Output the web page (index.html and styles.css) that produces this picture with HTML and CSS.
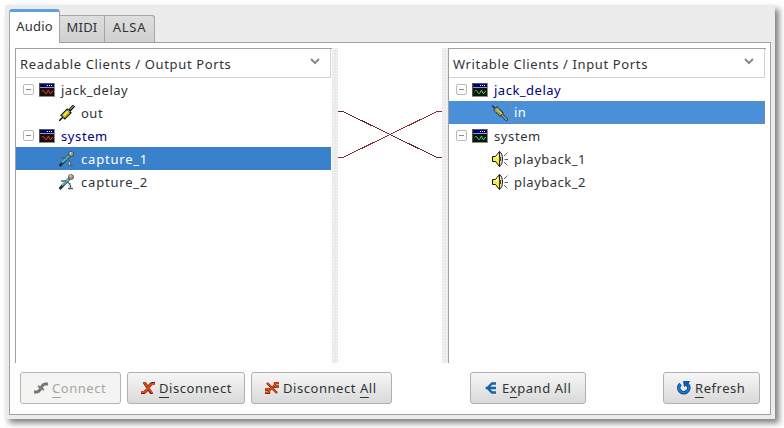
FILE: index.html
```html
<!DOCTYPE html>
<html lang="en">
<head>
<meta charset="utf-8">
<title>Connections</title>
<link rel="stylesheet" href="styles.css">
</head>
<body>
<svg class="defs" width="0" height="0" aria-hidden="true">
  <symbol id="term" viewBox="0 0 16 14">
    <path fill="#151010" d="M0 0h16v14H0z"/><path fill="#555" d="M0 0h15v1H1v12H0z"/><path fill="#8c8c8c" d="M15 0h1v14H0v-1h15z"/>
    <path fill="#00008b" d="M2 1h12v3H2z"/><path fill="#fff" d="M8 2h1v1H8zM10 2h1v1h-1zM12 2h1v1h-1z"/><path fill="#999" d="M1 4h14v1H1z"/>
    <path fill="none" stroke="currentColor" stroke-width="1" d="M2.500 8.500l1-1h1l2 3h1l2-3.500 1.500 3.500h1l1-2h1"/>
  </symbol>
  <symbol id="plug" viewBox="0 0 16 16">
    <path stroke="#111" stroke-width="1.500" d="M0 16l4-4"/><path stroke="#111" stroke-width="3" d="M10 6l5-5.500"/>
    <path stroke="#ddd" stroke-width="1" d="M11 4.500l4-4"/>
    <path stroke="#111" stroke-width="6.500" d="M3.500 12.500l7-7"/>
    <path stroke="#c8b81c" stroke-width="4.500" d="M4.500 11.500l5-5"/>
    <path stroke="#fff25a" stroke-width="1.500" d="M4.500 10.500l4.500-4.500"/>
    <path stroke="#999" stroke-width="1" d="M9 5l2 2M3 10.500l2.500 2.500"/>
  </symbol>
  <symbol id="jack" viewBox="0 0 16 16">
    <path stroke="#263545" stroke-width="1.500" d="M0 .5l4 4"/><path stroke="#263545" stroke-width="3" d="M10 10l5.500 5.500"/>
    <path stroke="#263545" stroke-width="5.500" d="M3 3l7 7"/>
    <path stroke="#aaa83b" stroke-width="3.800" d="M3.500 3.500l6 6"/>
    <path stroke="#dddc75" stroke-width="1" d="M5 4l5 5"/>
    <path stroke="#9eabb2" stroke-width="1.200" d="M3.500 6.500l3-3M10 10l5 5"/>
  </symbol>
  <symbol id="mic" viewBox="0 0 16 16">
    <path stroke="#243237" stroke-width="2.800" d="M.5 15l10-10.500"/>
    <path stroke="#50b9bd" stroke-width="2" d="M3 11.500l7.500-7"/>
    <circle cx="12" cy="3" r="2.800" fill="#444"/><circle cx="12" cy="2.800" r="2.100" fill="#a7a58a"/><path fill="#eee6a0" d="M11 1h1v2h-1z"/>
    <path fill="none" stroke="#52636b" stroke-width="1.300" d="M2 7h5M8 8l3 2-1 2M11.500 11v4M9 14.500h5"/>
    <path fill="#ccc" d="M10 11h1v3h-1z"/>
  </symbol>
  <symbol id="speaker" viewBox="0 0 16 16">
    <path fill="#ffed31" stroke="#111" d="M.5 5.500h3l4-5v15l-4-5h-3z"/>
    <path fill="#fffbc0" d="M2 6h2l2-3v4H2z"/>
    <path fill="#ddd" stroke="#222" d="M7.500.5c4 2 4 13 0 15z"/>
    <path fill="#444" d="M7 6h2v4H7z"/>
    <path stroke="#666" d="M12 5l3.500-3.500M12.500 8.500H16M12 11l3.500 3.500"/>
  </symbol>
  <symbol id="minus" viewBox="0 0 11 11"><rect x=".5" y=".5" width="10" height="10" rx="1.500" fill="#fdfdfd" stroke="#b9b9b9"/><path stroke="#8c8c88" d="M3 5.500h5"/></symbol>
  <symbol id="chev" viewBox="0 0 10 7"><path fill="none" stroke="#888a85" stroke-width="2" d="M1 1l4 4 4-4"/></symbol>
</svg>

<main class="window">
  <nav class="tabs">
    <div class="tab active">Audio</div><div class="tab midi">MIDI</div><div class="tab alsa">ALSA</div>
  </nav>
  <section class="pane">
    <div class="patch">
      <div class="list">
        <div class="head"><span>Readable Clients / Output Ports</span><svg class="chev"><use href="#chev"/></svg></div>
        <div class="row"><svg class="minus"><use href="#minus"/></svg><svg class="term red"><use href="#term"/></svg><span>jack_delay</span></div>
        <div class="row port"><svg class="icon"><use href="#plug"/></svg><span>out</span></div>
        <div class="row linked"><svg class="minus"><use href="#minus"/></svg><svg class="term red"><use href="#term"/></svg><span class="short">system</span></div>
        <div class="row port selected"><svg class="icon"><use href="#mic"/></svg><span class="wide">capture_1</span></div>
        <div class="row port"><svg class="icon"><use href="#mic"/></svg><span class="wide">capture_2</span></div>
      </div>
      <div class="split"></div>
      <svg class="wires" viewBox="0 0 104 315" shape-rendering="crispEdges">
        <path fill="none" stroke="#5b2a2d" d="M0 63.500h5L99 109.500h5"/>
        <path fill="none" stroke="#8d2d33" d="M0 109.500h5L99 63.500h5"/>
      </svg>
      <div class="split"></div>
      <div class="list">
        <div class="head"><span>Writable Clients / Input Ports</span><svg class="chev"><use href="#chev"/></svg></div>
        <div class="row linked"><svg class="minus"><use href="#minus"/></svg><svg class="term green"><use href="#term"/></svg><span>jack_delay</span></div>
        <div class="row port current"><svg class="icon"><use href="#jack"/></svg><span class="focus">in</span></div>
        <div class="row"><svg class="minus"><use href="#minus"/></svg><svg class="term green"><use href="#term"/></svg><span class="short">system</span></div>
        <div class="row port"><svg class="icon"><use href="#speaker"/></svg><span>playback_1</span></div>
        <div class="row port"><svg class="icon"><use href="#speaker"/></svg><span>playback_2</span></div>
      </div>
    </div>
    <div class="buttons">
      <button class="btn connect" disabled><svg viewBox="0 0 14 12"><path fill="none" stroke="#777" stroke-width="3" d="M0 10h3l2-1 4-6 2-1h3"/><path stroke="#777" stroke-width="2" d="M4 4l6 4"/></svg><span><u>C</u>onnect</span></button>
      <button class="btn disconnect"><svg viewBox="0 0 14 12"><path fill="none" stroke="#64190a" stroke-width="3" d="M0 10.500h3l2-1.500 4-6 2-1.500h3M3 0l8 12"/><path fill="none" stroke="#e34a12" stroke-width="1.800" d="M0 10h3l2-1 4-6 2-1h3M3 0l8 11"/></svg><span><u>D</u>isconnect</span></button>
      <button class="btn all"><svg viewBox="0 0 14 12"><path fill="none" stroke="#64190a" stroke-width="2.400" d="M0 7.500h4v3.500H0M14 1h-4v3.500h4M4 8l6-4.500M2 1l10 10"/><path fill="none" stroke="#e34a12" stroke-width="1.500" d="M0 7h4v3.500H0M14 1h-4v3h4M4 8l6-5M2 1l10 10"/></svg><span>Disconnect <u>A</u>ll</span></button>
      <button class="btn expand"><svg viewBox="0 0 12 12"><path fill="none" stroke="#1763a7" stroke-width="2.400" d="M1 6h10M11 1.500H7L4.500 4v4L7 10.500h4"/><path fill="#1763a7" d="M0 6l4-2.500v5z"/></svg><span>E<u>x</u>pand All</span></button>
      <button class="btn refresh"><svg viewBox="0 0 14 14"><path fill="none" stroke="#0b3e79" stroke-width="3.500" d="M3.500 3a5 5 0 1 0 7.500 1"/><path fill="none" stroke="#137bd8" stroke-width="2" d="M3.500 3a5 5 0 1 0 7.500 1"/><path fill="#0c58a9" d="M6 0h7l-1 2-1 5-2-2-2 1z"/></svg><span><u>R</u>efresh</span></button>
    </div>
  </section>
</main>
</body>
</html>
```
FILE: styles.css
```css
* { box-sizing: border-box; }
html { height: 428px; overflow: hidden; }
body {
  margin: 0; padding: 5px; height: 428px; background: #fff; color: #2e3436; overflow: hidden;
  font: 13px/18px "Noto Sans", "Open Sans", sans-serif; letter-spacing: .5px;
}
.defs { display: none; }
svg { display: block; flex: none; }
span { white-space: pre; }
.window {
  width: 770px; height: 414px; padding: 4px; background: #ececec;
  display: flex; flex-direction: column;
  box-shadow: 4px 4px 6px rgba(0, 0, 0, .5);
}
.tabs { display: flex; align-items: flex-end; height: 33px; flex: none; letter-spacing: .2px; }
.tab {
  height: 27px; padding-top: 3px; text-align: center;
  border: 1px solid #a5a5a5; border-left: 0; border-bottom: 0;
  background: linear-gradient(#dedede, #d0d0d0);
}
.tab.active {
  width: 51px; height: 34px; margin-bottom: -1px; padding-top: 5px;
  background: #fefefe; border: 1px solid #a5a5a5; border-bottom: 0;
  border-top: 3px solid #5f9fe2; border-radius: 3px 3px 0 0; z-index: 1;
}
.midi { width: 45px; }
.alsa { width: 50px; border-top-right-radius: 3px; letter-spacing: .7px; }
.tab { padding-top: 2px; }
.pane { height: 373px; border: 1px solid #a0a0a0; background: #fefefe; padding: 5px 4px 5px 5px; flex: none; }
.patch { display: flex; height: 315px; }
.list { width: 317px; border-left: 1px solid #a0a0a0; border-top: 1px solid #a0a0a0; background: #fff; padding-right: 1px; }
.list:last-child { width: 318px; }
.head {
  height: 29px; padding: 1px 10px 0 4px; display: flex; align-items: center; justify-content: space-between;
  border-right: 1px solid #d3d3d3; border-bottom: 1px solid #d3d3d3; letter-spacing: .63px;
}
.chev { width: 10px; height: 7px; margin-bottom: 4px; }
.row { height: 23px; display: flex; align-items: center; padding-left: 7px; }
.minus { width: 11px; height: 11px; margin-right: 5px; }
.term { width: 16px; height: 14px; margin-right: 6px; }
.red { color: #ff3415; }
.green { color: #20e83c; }
.linked { color: #000080; }
.port { padding-left: 43px; }
.icon { width: 16px; height: 16px; margin-right: 6px; }
.wide { letter-spacing: .8px; }
.short { letter-spacing: .6px; }
.selected { background: #3a81cc; color: #fff; }
.current { background: #4a90d9; color: #fff; }
.focus {
  flex: 1; height: 23px; line-height: 23px; margin-left: -3px; padding-left: 3px;
  outline: 1px dotted #8a8a80; outline-offset: -1px;
}
.split {
  width: 6px; background-color: #eaeaea;
  background-image: radial-gradient(circle, #fff 35%, transparent 40%); background-size: 3px 3px;
}
.wires { width: 104px; height: 315px; }
.buttons { display: flex; padding: 9px 6px 0 5px; }
.btn {
  height: 32px; padding: 0; display: flex; align-items: center; gap: 4px;
  font: inherit; letter-spacing: .55px; color: #2e3436;
  border: 1px solid #b0b0b0; border-radius: 3px; background: linear-gradient(#f6f6f6, #d9d9d9);
}
.btn svg { width: 14px; height: 12px; }
.btn u { text-underline-offset: 4px; text-decoration-thickness: 1px; text-decoration-skip-ink: none; }
.connect { width: 101px; padding-left: 13px; margin-right: 6px; background: #f4f4f2; color: #a6a6a6; border-color: #b5b5b5; }
.disconnect { width: 118px; padding-left: 13px; margin-right: 6px; }
.all { width: 141px; padding-left: 13px; margin-right: 78px; }
.expand { width: 116px; padding-left: 14px; margin-right: auto; gap: 5px; }
.btn.expand svg { width: 12px; }
.refresh { width: 97px; padding-left: 13px; }
.btn.refresh svg { height: 14px; }
```
